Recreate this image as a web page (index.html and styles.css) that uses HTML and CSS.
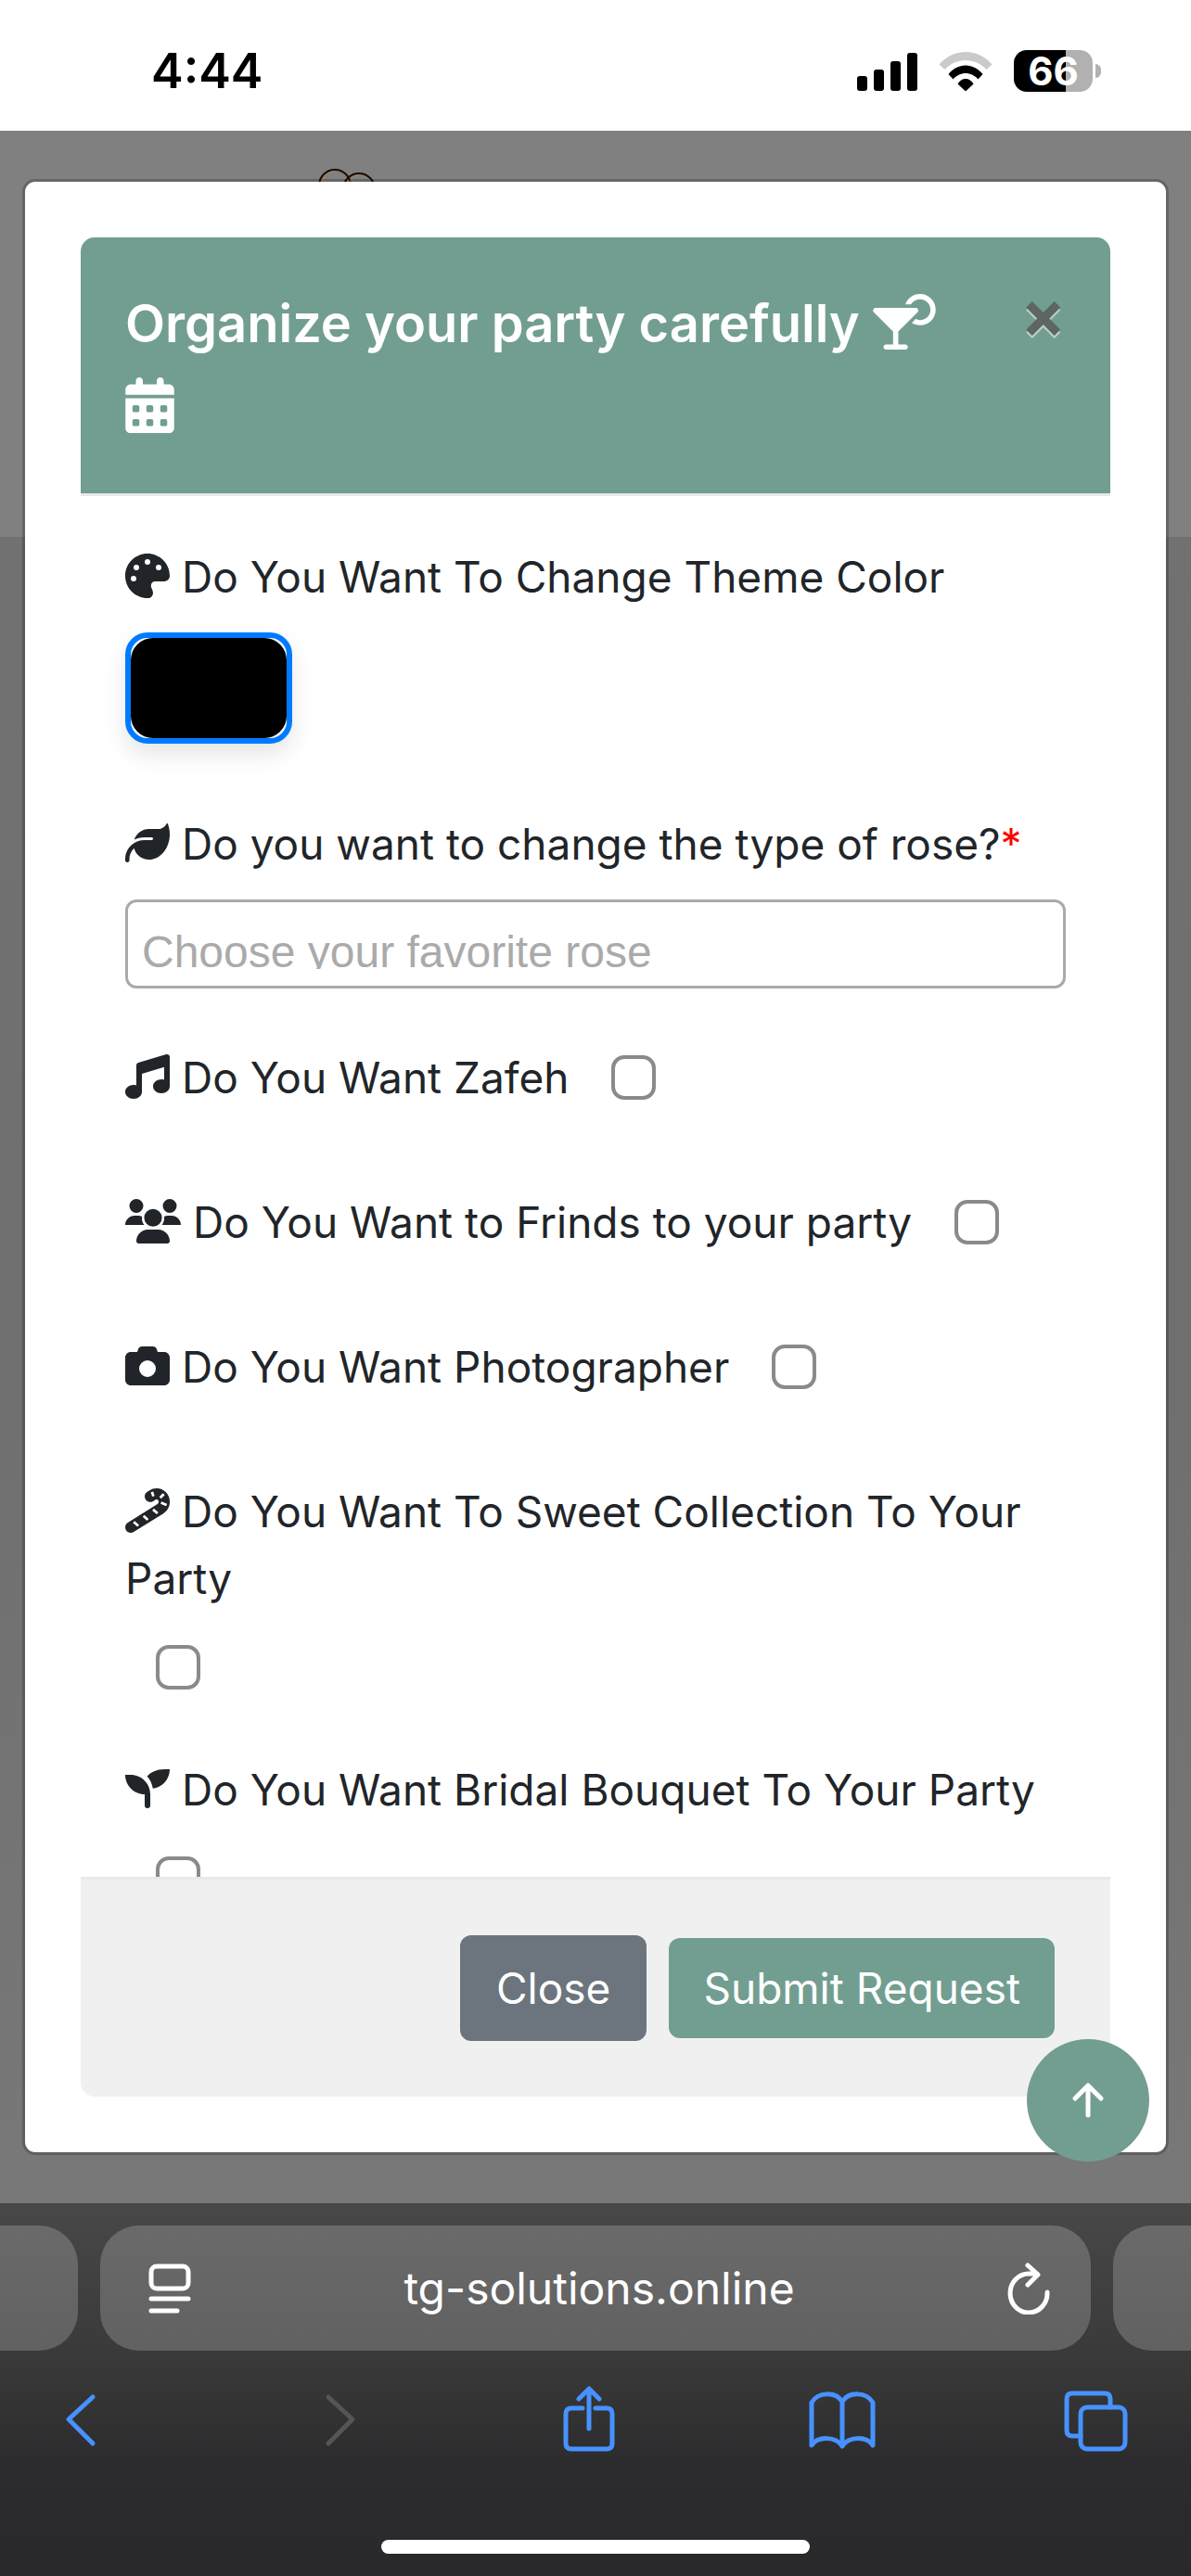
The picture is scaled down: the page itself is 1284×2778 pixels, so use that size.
FILE: index.html
```html
<!DOCTYPE html>
<html lang="en">
<head>
    <meta charset="UTF-8">
    <meta name="viewport" content="width=device-width, initial-scale=1.0">
    <title>Organize your party</title>
    <link rel="stylesheet" href="styles.css">
</head>
<body>

<!-- Status bar -->
<div class="status-bar">
    <div class="time">4:44</div>
    <div class="status-icons">
        <svg class="signal" width="65" height="42" viewBox="0 0 65 42">
            <rect x="0" y="26" width="11" height="16" rx="3"/>
            <rect x="18" y="19" width="11" height="23" rx="3"/>
            <rect x="36" y="10" width="11" height="32" rx="3"/>
            <rect x="54" y="1" width="11" height="41" rx="3"/>
        </svg>
        <svg class="wifi" width="58" height="42" viewBox="0 0 58 42">
            <path fill="#cacaca" d="M0.500 13.500C8 5 18 0 29 0s21 5 28.500 13.500L51.500 19C45.500 12.500 37.500 9 29 9S12.500 12.500 6.500 19z"/>
            <path d="M10.500 24C15.500 18 22 14.500 29 14.500S42.500 18 47.500 24L42.500 29.500C39 25.500 34 23 29 23s-10 2.500-13.500 6.500z"/>
            <path d="M20.500 34.500C22.500 31 25.500 29 29 29s6.500 2 8.500 5.500L29 42.500z"/>
        </svg>
        <div class="battery"><span>66</span></div>
    </div>
</div>

<main class="page">
    <svg class="page-logo" width="62" height="40" viewBox="0 0 62 40">
        <g fill="none" stroke="#1c0d04" stroke-width="2">
            <circle cx="18" cy="19" r="17"/>
            <path d="M27 23a17 17 0 0 1 34 0"/>
        </g>
        <path fill="none" stroke="#b08a4a" stroke-width="1" d="M4 17C6 9 11 4 17 4M31 21c2-8 7-12 13-13"/>
    </svg>

    <div class="modal" role="dialog" aria-labelledby="modal-title">
        <div class="modal-header">
            <h5 class="modal-title" id="modal-title">Organize your party carefully
                <svg class="icon-title" viewBox="0 0 576 512" width="68" height="60"><path d="M432 240c53 0 96-43 96-96s-43-96-96-96c-35.500 0-66.600 19.300-83.200 48H296.200C316 40.100 369.300 0 432 0c79.500 0 144 64.500 144 144s-64.500 144-144 144c-27.700 0-53.500-7.800-75.500-21.300l35.400-35.400c12.200 5.600 25.800 8.700 40.100 8.700zM1.800 142.800C5.500 133.800 14.300 128 24 128H392c9.700 0 18.500 5.800 22.200 14.800s1.700 19.300-5.200 26.200l-177 177V464h64c13.300 0 24 10.700 24 24s-10.700 24-24 24H120c-13.300 0-24-10.700-24-24s10.700-24 24-24h64V345.900L7 169C.2 162.100-1.900 151.800 1.800 142.800z"/></svg>
                <svg class="icon-title" viewBox="0 0 448 512" width="53" height="60"><path d="M128 0c17.700 0 32 14.300 32 32V64H288V32c0-17.700 14.300-32 32-32s32 14.300 32 32V64h48c26.500 0 48 21.500 48 48v48H0V112C0 85.500 21.500 64 48 64H96V32c0-17.700 14.300-32 32-32zM0 192H448V464c0 26.500-21.500 48-48 48H48c-26.500 0-48-21.500-48-48V192zm64 80v32c0 8.800 7.200 16 16 16h32c8.800 0 16-7.200 16-16V272c0-8.800-7.200-16-16-16H80c-8.800 0-16 7.200-16 16zm128 0v32c0 8.800 7.200 16 16 16h32c8.800 0 16-7.200 16-16V272c0-8.800-7.200-16-16-16H208c-8.800 0-16 7.200-16 16zm144-16c-8.800 0-16 7.200-16 16v32c0 8.800 7.200 16 16 16h32c8.800 0 16-7.200 16-16V272c0-8.800-7.200-16-16-16H336zM64 400v32c0 8.800 7.200 16 16 16h32c8.800 0 16-7.200 16-16V400c0-8.800-7.200-16-16-16H80c-8.800 0-16 7.200-16 16zm144-16c-8.800 0-16 7.200-16 16v32c0 8.800 7.200 16 16 16h32c8.800 0 16-7.200 16-16V400c0-8.800-7.200-16-16-16H208zm112 16v32c0 8.800 7.200 16 16 16h32c8.800 0 16-7.200 16-16V400c0-8.800-7.200-16-16-16H336c-8.800 0-16 7.200-16 16z"/></svg>
            </h5>
            <button type="button" class="close" aria-label="Close dialog">&times;</button>
        </div>

        <form class="modal-body" id="party-form">
            <div class="form-group color-group">
                <label for="theme-color"><svg class="icon" viewBox="0 0 512 512"><path d="M512 256c0 .9 0 1.800 0 2.700c-.4 36.500-33.600 61.300-70.100 61.300H344c-26.500 0-48 21.500-48 48c0 3.400 .4 6.700 1 9.900c2.100 10.200 6.500 20 10.800 29.900c6.100 13.800 12.100 27.500 12.100 42c0 31.800-21.600 60.700-53.400 62c-3.500 .1-7 .2-10.600 .2C114.600 512 0 397.400 0 256S114.600 0 256 0S512 114.600 512 256zM128 288a32 32 0 1 0 -64 0 32 32 0 1 0 64 0zm0-96a32 32 0 1 0 0-64 32 32 0 1 0 0 64zM288 96a32 32 0 1 0 -64 0 32 32 0 1 0 64 0zm96 96a32 32 0 1 0 0-64 32 32 0 1 0 0 64z"/></svg> Do You Want To Change Theme Color</label>
                <input type="color" id="theme-color" class="color-input" value="#000000">
            </div>

            <div class="form-group">
                <label for="rose"><svg class="icon" viewBox="0 0 512 512"><path d="M272 96c-78.600 0-145.100 51.500-167.700 122.500c33.600-17 71.500-26.500 111.700-26.500h88c8.800 0 16 7.200 16 16s-7.200 16-16 16H216c-16.600 0-32.700 1.900-48.300 5.400c-25.900 5.900-49.900 16.400-71.400 30.700C38.300 298.800 0 364.900 0 440v16c0 13.300 10.700 24 24 24s24-10.700 24-24V440c0-48.700 20.700-92.500 53.800-123.200C121.600 392.300 190.300 448 272 448l1 0c132.100-.7 239-130.900 239-291.400c0-42.600-7.500-83.100-21.100-119.600c-2.600-6.900-12.700-6.600-16.200-.1C455.900 72.100 418.700 96 376 96L272 96z"/></svg> Do you want to change the type of rose?<span class="required">*</span></label>
                <div class="select-box">
                    <textarea id="rose" rows="1" placeholder="Choose your favorite rose"></textarea>
                </div>
            </div>

            <div class="form-group">
                <label for="zafeh"><svg class="icon" viewBox="0 0 512 512"><path d="M499.100 6.300c8.100 6 12.900 15.600 12.900 25.700v72V368c0 44.200-43 80-96 80s-96-35.800-96-80s43-80 96-80c11.200 0 22 1.600 32 4.600V147L192 223.800V432c0 44.200-43 80-96 80s-96-35.800-96-80s43-80 96-80c11.200 0 22 1.600 32 4.600V200 128c0-14.100 9.300-26.600 22.800-30.700l320-96c9.700-2.900 20.200-1.100 28.300 5z"/></svg> Do You Want Zafeh</label>
                <input type="checkbox" id="zafeh">
            </div>

            <div class="form-group">
                <label for="friends"><svg class="icon icon-wide" viewBox="0 0 640 512"><path d="M128 0a80 80 0 1 1 0 160A80 80 0 1 1 128 0zM512 0a80 80 0 1 1 0 160A80 80 0 1 1 512 0zM0 298.700C0 239.800 47.800 192 106.700 192h42.700c15.900 0 31 3.500 44.600 9.700c-1.300 7.200-1.900 14.700-1.900 22.300c0 30 10 55 26 75H0zM422 299c16-20 26-45 26-75c0-7.600-.7-15-1.900-22.300c13.600-6.300 28.700-9.700 44.600-9.700h42.700C592.200 192 640 239.800 640 298.700zM218 216a102 102 0 1 1 204 0 102 102 0 1 1 -204 0zM128 485.300C128 411.700 187.700 352 261.300 352H378.700C452.300 352 512 411.700 512 485.300c0 14.700-11.900 26.700-26.700 26.700H154.700c-14.700 0-26.700-11.900-26.700-26.700z"/></svg> Do You Want to Frinds to your party</label>
                <input type="checkbox" id="friends">
            </div>

            <div class="form-group">
                <label for="photographer"><svg class="icon" viewBox="0 0 512 512"><path d="M149.100 64.800L138.700 96H64C28.700 96 0 124.700 0 160V416c0 35.300 28.700 64 64 64H448c35.300 0 64-28.700 64-64V160c0-35.300-28.700-64-64-64H373.300L362.900 64.800C356.400 45.200 338.100 32 317.400 32H194.600c-20.700 0-39 13.200-45.500 32.800zM256 192a96 96 0 1 1 0 192 96 96 0 1 1 0-192z"/></svg> Do You Want Photographer</label>
                <input type="checkbox" id="photographer">
            </div>

            <div class="form-group">
                <label for="sweets"><svg class="icon" viewBox="0 0 512 512"><path d="M348.800 131.500c3.700-2.300 7.900-3.500 12.200-3.500c12.700 0 23 10.300 23 23v5.600c0 9.900-5.100 19.100-13.500 24.300L30.100 393.700C.1 412.500-9 451.900 9.700 481.900s58.200 39.100 88.200 20.400L438.400 289.500c45.800-28.600 73.600-78.800 73.600-132.800V151C512 67.600 444.400 0 361 0c-28.300 0-56 8-80.100 23L254.100 39.700c-30 18.700-39.100 58.200-20.400 88.200s58.200 39.100 88.200 20.400l26.800-16.800z"/><path class="cane-stripes" d="M308 42l16 50M444 66l-42 44M412 166l64 26M320 244l52 44M210 318l50 44M98 386l52 46"/></svg> Do You Want To Sweet Collection To Your Party</label>
                <input type="checkbox" id="sweets">
            </div>

            <div class="form-group">
                <label for="bouquet"><svg class="icon" viewBox="0 0 512 512"><path d="M512 32C512 145.600 427.400 239.500 317.800 254c-7.100-53.400-30.600-101.600-65.300-139.300C290.800 65 364 32 448 32zM0 96H64c123.700 0 224 100.300 224 224V448a32 32 0 0 1-64 0V320C100.300 320 0 219.700 0 96z"/></svg> Do You Want Bridal Bouquet To Your Party</label>
                <input type="checkbox" id="bouquet">
            </div>
        </form>

        <div class="modal-footer">
            <button type="button" class="btn btn-secondary">Close</button>
            <button type="submit" form="party-form" class="btn btn-submit">Submit Request</button>
        </div>
    </div>

    <button type="button" class="back-to-top" aria-label="Back to top">
        <svg width="36" height="40" viewBox="0 0 36 40"><path d="M18 36V4M4 18L18 4l14 14"/></svg>
    </button>
</main>

<!-- Browser bar -->
<div class="browser-bar">
    <div class="tabs-row">
        <div class="side-tab side-left"></div>
        <div class="address">
            <button type="button" class="tool" aria-label="Page menu">
                <svg width="46" height="54" viewBox="0 0 46 54"><rect x="3" y="3" width="40" height="24" rx="6"/><path d="M3 38h40M3 51h28"/></svg>
            </button>
            <a class="url" href="#">tg-solutions.online</a>
            <button type="button" class="tool" aria-label="Reload">
                <svg width="46" height="56" viewBox="0 0 46 56"><path d="M43 32A20 21 0 1 1 23 12H32M22 3L33 13 22 24"/></svg>
            </button>
        </div>
        <div class="side-tab side-right"></div>
    </div>
    <div class="toolbar">
        <button type="button" aria-label="Back"><svg width="72" height="72" viewBox="0 0 72 72"><path d="M50 12L24 36 50 62"/></svg></button>
        <button type="button" class="disabled" aria-label="Forward" disabled><svg width="72" height="72" viewBox="0 0 72 72"><path d="M30 12L56 36 30 62"/></svg></button>
        <button type="button" aria-label="Share"><svg width="72" height="72" viewBox="0 0 72 72"><path d="M30 24H18q-6 0-6 6v32q0 6 6 6h38q6 0 6-6V30q0-6-6-6H44M37 46V3M26 14L37 3 48 14"/></svg></button>
        <button type="button" aria-label="Bookmarks"><svg width="72" height="72" viewBox="0 0 72 72"><path d="M36 17C29 6 10 6 3 18V64C10 54 29 54 36 65 43 54 62 54 69 64V18C62 6 43 6 36 17V65"/></svg></button>
        <button type="button" aria-label="Tabs"><svg width="72" height="72" viewBox="0 0 72 72"><rect x="19" y="23" width="48" height="45" rx="7"/><path d="M51 23V14q0-6-6-6H10q-6 0-6 6V48q0 6 6 6h9"/></svg></button>
    </div>
    <div class="home-indicator"></div>
</div>

</body>
</html>
```
FILE: styles.css
```css
* {
    box-sizing: border-box;
}
body {
    margin: 0;
    height: 100vh;
    display: flex;
    flex-direction: column;
    overflow: hidden;
    font-family: Inter, "Liberation Sans", sans-serif;
    font-size: 46px;
    line-height: 72px;
    color: #212529;
    background-color: #fff;
}
button {
    font-family: inherit;
    cursor: pointer;
}

/* Status bar */
.status-bar {
    height: 141px;
    padding: 12px 106px 0 163px;
    display: flex;
    justify-content: space-between;
    align-items: center;
    color: #000;
}
.time {
    font-size: 52px;
    font-weight: 600;
}
.status-icons {
    display: flex;
    align-items: center;
    gap: 23px;
}
.battery {
    width: 85px;
    height: 45px;
    border-radius: 14px;
    background: linear-gradient(to right, #000 56px, #b1b1b1 56px);
    color: #fff;
    font-size: 42px;
    font-weight: 700;
    line-height: 45px;
    text-align: center;
    position: relative;
}
.battery::after {
    content: "";
    position: absolute;
    left: 88px;
    top: 15px;
    width: 6px;
    height: 15px;
    border-radius: 0 6px 6px 0;
    background-color: #b1b1b1;
}

/* Page behind the modal */
.page {
    flex: 1;
    min-height: 0;
    padding: 52px 24px;
    display: flex;
    position: relative;
    background: linear-gradient(to bottom, #808080 438px, #717171 438px, #6f6f6f 60%, #787878);
}
.page-logo {
    position: absolute;
    left: 343px;
    top: 40px;
}

/* Modal */
.modal {
    flex: 1;
    min-width: 0;
    display: flex;
    flex-direction: column;
    padding: 60px;
    background-color: #fff;
    background-clip: padding-box;
    border: 3px solid rgba(0, 0, 0, 0.2);
    border-radius: 14px;
    position: relative;
}
.modal-header {
    display: flex;
    justify-content: space-between;
    align-items: flex-start;
    padding: 48px;
    background-color: #729e91;
    background-clip: padding-box;
    border-bottom: 3px solid #e6eaee;
    border-radius: 15px 15px 0 0;
}
.modal-title {
    flex: 1;
    margin: 0;
    font-size: 56px;
    font-weight: 600;
    line-height: 90px;
    color: #fff;
}
.icon-title {
    fill: #fff;
    vertical-align: -8px;
}
.close {
    padding: 0 0 0 48px;
    border: 0;
    background: none;
    font-size: 72px;
    font-weight: 700;
    line-height: 68px;
    color: #5d6662;
    text-shadow: 0 3px 0 #b9cfc8;
}
.modal-body {
    flex: 1;
    min-height: 0;
    overflow: hidden;
    padding: 51px 48px;
}
.form-group {
    margin-bottom: 60px;
}
label {
    display: inline-block;
    margin-bottom: 24px;
    vertical-align: top;
}
.icon {
    width: 48px;
    height: 48px;
    fill: #212529;
    vertical-align: -6px;
}
.icon-wide {
    width: 60px;
}
.cane-stripes {
    fill: none;
    stroke: #fff;
    stroke-width: 30;
}
.required {
    color: #f00;
}
.color-group {
    margin-bottom: 72px;
}
.color-input {
    display: block;
    width: 180px;
    height: 120px;
    padding: 0;
    border: 6px solid #007bff;
    border-radius: 24px;
    background-color: #fff;
    box-shadow: 0 12px 24px rgba(0, 0, 0, 0.1);
    appearance: none;
}
.color-input::-webkit-color-swatch-wrapper {
    padding: 0;
}
.color-input::-webkit-color-swatch {
    border: 0;
    border-radius: 24px;
}
.select-box {
    height: 96px;
    padding: 18px 15px 0;
    border: 3px solid #aaa;
    border-radius: 12px;
}
.select-box textarea {
    display: block;
    width: 100%;
    height: 54px;
    padding: 0;
    border: 0;
    resize: none;
    overflow: hidden;
    background: none;
    font-family: "Liberation Sans", Arial, sans-serif;
    font-size: 48px;
    line-height: 72px;
}
.select-box textarea::placeholder {
    color: #aaa;
}
input[type="checkbox"] {
    appearance: none;
    width: 48px;
    height: 48px;
    margin: 12px 0 12px 33px;
    border: 4px solid #8a8a8e;
    border-radius: 14px;
    background-color: #fff;
    vertical-align: top;
}

/* Modal footer */
.modal-footer {
    display: flex;
    justify-content: flex-end;
    align-items: center;
    gap: 24px;
    padding: 60px;
    background-color: #f0f0f0;
    border-top: 3px solid #e6eaee;
    border-radius: 0 0 15px 15px;
}
.btn {
    padding: 18px 37px;
    border: 0;
    border-radius: 12px;
    font-size: 46px;
    line-height: 72px;
    color: #fff;
}
.btn-secondary {
    padding: 18px 36px;
    border: 3px solid #6c757d;
    background-color: #6c757d;
}
.btn-submit {
    background-color: #729e91;
}
.back-to-top {
    position: absolute;
    right: 45px;
    bottom: 45px;
    width: 132px;
    height: 132px;
    padding: 0;
    display: flex;
    justify-content: center;
    align-items: center;
    border: 0;
    border-radius: 50%;
    background-color: #729e91;
}
.back-to-top svg,
.tool svg,
.toolbar svg {
    fill: none;
    stroke: #fff;
    stroke-width: 5;
    stroke-linecap: round;
    stroke-linejoin: round;
}

/* Browser bar */
.browser-bar {
    height: 402px;
    padding: 24px 0;
    display: flex;
    flex-direction: column;
    background: linear-gradient(to bottom, #484848, #3a3a3a 40%, #2c2c2e 70%, #29292b);
}
.tabs-row {
    display: flex;
    gap: 24px;
}
.side-tab,
.address {
    height: 135px;
    background: linear-gradient(to bottom, #6a6a6a, #616161);
}
.side-tab {
    width: 84px;
}
.side-left {
    border-radius: 0 42px 42px 0;
}
.side-right {
    border-radius: 42px 0 0 42px;
}
.address {
    flex: 1;
    padding: 0 44px 0 52px;
    display: flex;
    justify-content: space-between;
    align-items: center;
    border-radius: 42px;
}
.url {
    font-size: 48px;
    color: #fff;
    text-decoration: none;
}
.tool {
    padding: 0;
    border: 0;
    background: none;
    display: flex;
}
.toolbar {
    display: flex;
    justify-content: space-between;
    padding: 38px 66px 0 50px;
}
.toolbar button {
    padding: 0;
    border: 0;
    background: none;
    display: flex;
}
.toolbar svg {
    stroke: #4792ff;
}
.toolbar .disabled svg {
    stroke: #555;
}
.home-indicator {
    width: 36%;
    height: 15px;
    margin: auto auto 0;
    border-radius: 8px;
    background-color: #fff;
}
```
